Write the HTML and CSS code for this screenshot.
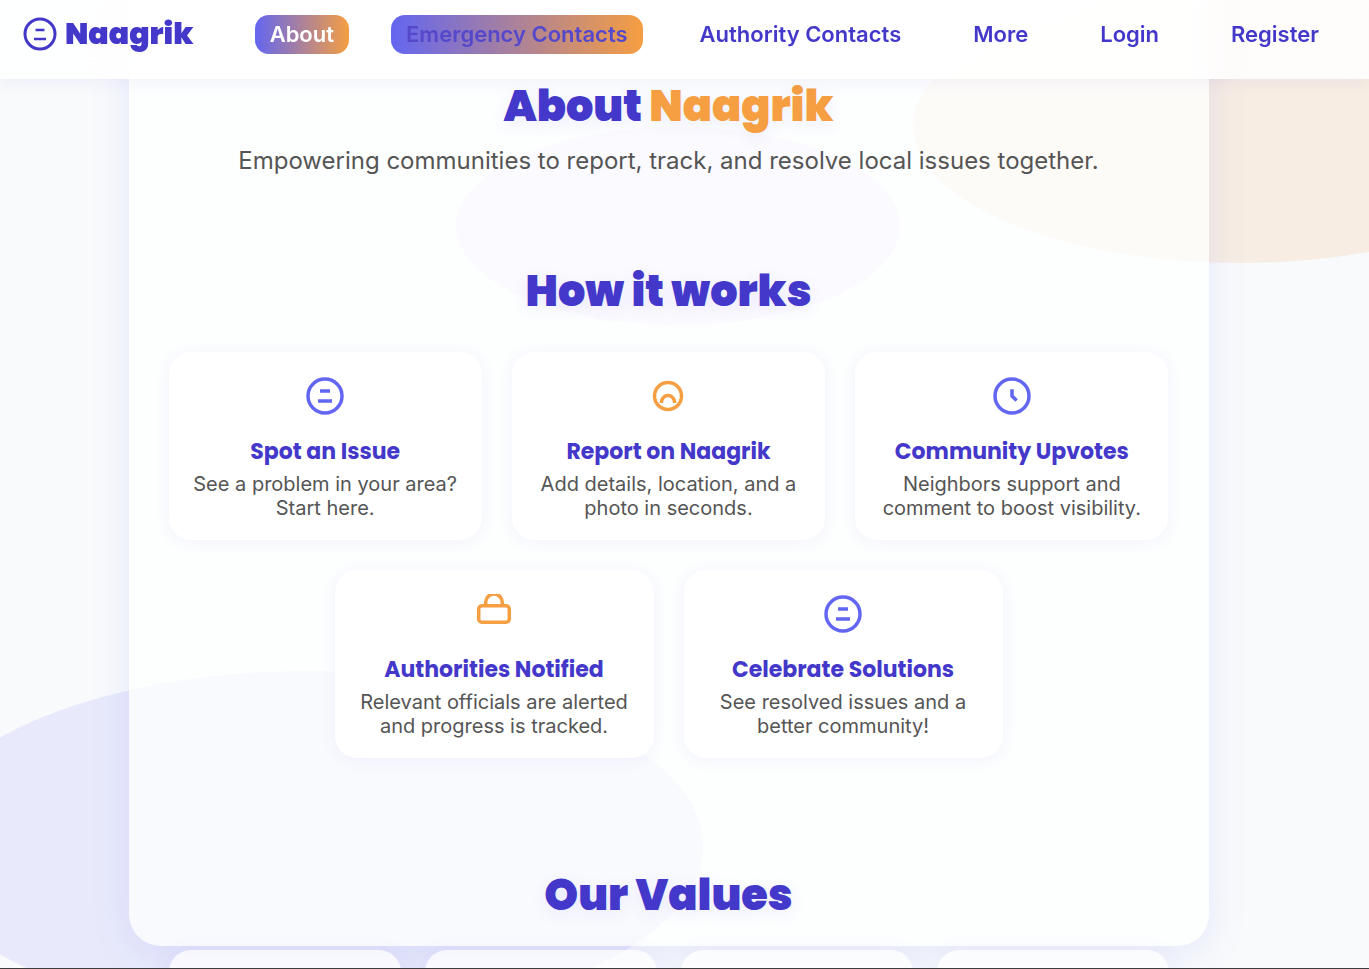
FILE: index.html
```html
<!DOCTYPE html>
<html lang="en">
<head>
<meta charset="utf-8">
<meta name="viewport" content="width=device-width, initial-scale=1">
<title>About Naagrik</title>
<link rel="stylesheet" href="styles.css">
</head>
<body>
<div class="page">
  <svg class="backdrop" viewBox="0 0 1369 968" preserveAspectRatio="none" aria-hidden="true">
    <ellipse cx="1240" cy="126" rx="327" ry="137" fill="#f3a142" opacity=".135"/>
    <ellipse cx="678" cy="226" rx="222" ry="99" fill="#a78bfa" opacity=".14"/>
    <ellipse cx="309" cy="846" rx="394" ry="175" fill="#6366f1" opacity=".1"/>
  </svg>

  <header class="header">
    <a class="brand" href="#">
      <svg class="brand-icon" viewBox="0 0 34 34" fill="none" stroke="currentColor" aria-hidden="true">
        <circle cx="17" cy="17" r="15" stroke-width="3"/>
        <path d="M12.5 13h9M11 22h12" stroke-width="2.6"/>
      </svg>
      <span>Naagrik</span>
    </a>
    <nav class="nav">
      <a class="nav-link active" href="#about">About</a>
      <a class="nav-link hovered" href="#emergency">Emergency Contacts</a>
      <a class="nav-link" href="#authority">Authority Contacts</a>
      <a class="nav-link" href="#more">More</a>
      <a class="nav-link" href="#login">Login</a>
      <a class="nav-link" href="#register">Register</a>
    </nav>
  </header>

  <div class="content">
    <main class="panel" id="about">
      <h1 class="heading">About <span class="accent">Naagrik</span></h1>
      <p class="lead">Empowering communities to report, track, and resolve local issues together.</p>

      <h2 class="heading how">How it works</h2>
      <div class="steps">
        <article class="step">
          <svg class="step-icon indigo" viewBox="0 0 40 40" aria-hidden="true">
            <circle cx="20" cy="20" r="17"/><path d="M15 15h10M13 25h14"/>
          </svg>
          <h3>Spot an Issue</h3>
          <p>See a problem in your area? Start here.</p>
        </article>
        <article class="step">
          <svg class="step-icon orange" viewBox="0 0 40 40" aria-hidden="true">
            <circle cx="20" cy="20" r="13.5"/><path d="M13.5 27v-1a6.5 6.5 0 0 1 13 0v1"/>
          </svg>
          <h3>Report on Naagrik</h3>
          <p>Add details, location, and a photo in seconds.</p>
        </article>
        <article class="step">
          <svg class="step-icon indigo" viewBox="0 0 40 40" aria-hidden="true">
            <circle cx="20" cy="20" r="17"/><path d="M20 13.3v6.7l4.6 4.6"/>
          </svg>
          <h3>Community Upvotes</h3>
          <p>Neighbors support and comment to boost visibility.</p>
        </article>
        <article class="step">
          <svg class="step-icon orange" viewBox="0 0 40 40" aria-hidden="true">
            <rect x="4.7" y="11.7" width="30.6" height="16.6" rx="3.3"/><path d="M11.7 11.7V8.3a8.3 8.3 0 0 1 16.6 0v3.4"/>
          </svg>
          <h3>Authorities Notified</h3>
          <p>Relevant officials are alerted and progress is tracked.</p>
        </article>
        <article class="step">
          <svg class="step-icon indigo" viewBox="0 0 40 40" aria-hidden="true">
            <circle cx="20" cy="20" r="17"/><path d="M15 15h10M13 25h14"/>
          </svg>
          <h3>Celebrate Solutions</h3>
          <p>See resolved issues and a better community!</p>
        </article>
      </div>

      <h2 class="heading values-title">Our Values</h2>
    </main>
    <div class="values">
      <div class="value"></div>
      <div class="value"></div>
      <div class="value"></div>
      <div class="value"></div>
    </div>
  </div>
</div>
</body>
</html>
```
FILE: styles.css
```css
* { box-sizing: border-box; margin: 0; }

body {
  background: #f8fafc;
  color: #555;
  font-family: Inter, "Liberation Sans", sans-serif;
}

.page {
  position: relative;
  height: 100vh;
  overflow: hidden;
  border-bottom: 1px solid #3c3c3e;
}

.backdrop {
  position: absolute;
  inset: 0;
  width: 100%;
  height: 100%;
}

.header {
  position: fixed;
  z-index: 2;
  top: 0;
  left: 0;
  right: 0;
  display: flex;
  align-items: flex-start;
  justify-content: space-between;
  gap: 24px;
  padding: 15px 35px 25px 23px;
  background: rgba(255, 255, 255, .85);
  backdrop-filter: blur(12px);
  box-shadow: 0 2px 16px rgba(67, 56, 202, .07);
}

.brand {
  display: flex;
  align-items: center;
  gap: 8px;
  color: #4338ca;
  font-family: Poppins, Inter, sans-serif;
  font-size: 30px;
  font-weight: 900;
  line-height: 38px;
  text-decoration: none;
}

.brand-icon { width: 34px; height: 34px; }

.nav { display: flex; gap: 42px; }

.nav-link {
  padding: 0 15px;
  border-radius: 14px;
  color: #4338ca;
  font-size: 22px;
  font-weight: 600;
  line-height: 39px;
  text-decoration: none;
  white-space: nowrap;
}

.nav-link.active,
.nav-link.hovered { background: linear-gradient(90deg, #6366f1, #f59e42); }
.nav-link.active { color: #fff; }
.nav-link.hovered { color: #5548cb; }

.content {
  position: relative;
  max-width: 1080px;
  margin: 0 auto;
  left: -16px;
}

.panel {
  padding: 72px 40px 17px;
  border-radius: 0 0 32px 32px;
  background: rgba(255, 255, 255, .75);
  box-shadow: 0 8px 40px rgba(99, 102, 241, .12);
  text-align: center;
}

.heading {
  color: #4338ca;
  font-family: Poppins, Inter, sans-serif;
  font-size: 43px;
  font-weight: 900;
  line-height: 68px;
  text-shadow: 0 4px 16px rgba(99, 102, 241, .1);
}

.accent { color: #f59e42; }

.lead {
  font-size: 24px;
  line-height: 42px;
}

.how { margin-top: 75px; }

.steps {
  display: flex;
  flex-wrap: wrap;
  justify-content: center;
  gap: 30px;
  margin-top: 27px;
}

.step {
  flex: 1 1 260px;
  max-width: 319px;
  padding: 24px 24px 20px;
  border-radius: 22px;
  background: #fff;
  box-shadow: 0 2px 16px rgba(99, 102, 241, .07);
}

.step-icon {
  display: block;
  width: 40px;
  height: 40px;
  margin: 0 auto 19px;
  fill: none;
  stroke-width: 3.5;
}

.indigo { stroke: #6366f1; }
.orange { stroke: #f59e42; }

.step h3 {
  margin-bottom: 3px;
  color: #4338ca;
  font-family: Poppins, Inter, sans-serif;
  font-size: 22px;
  font-weight: 700;
  line-height: 34px;
}

.step p {
  font-size: 20px;
  line-height: 24px;
}

.values-title { margin-top: 103px; }

.values {
  position: relative;
  display: grid;
  grid-template-columns: repeat(4, 1fr);
  gap: 24px;
  margin-top: 4px;
  padding: 0 40px;
}

.value {
  height: 180px;
  border-radius: 22px;
  background: rgba(255, 255, 255, .75);
  box-shadow: 0 4px 24px rgba(99, 102, 241, .08);
}
```
